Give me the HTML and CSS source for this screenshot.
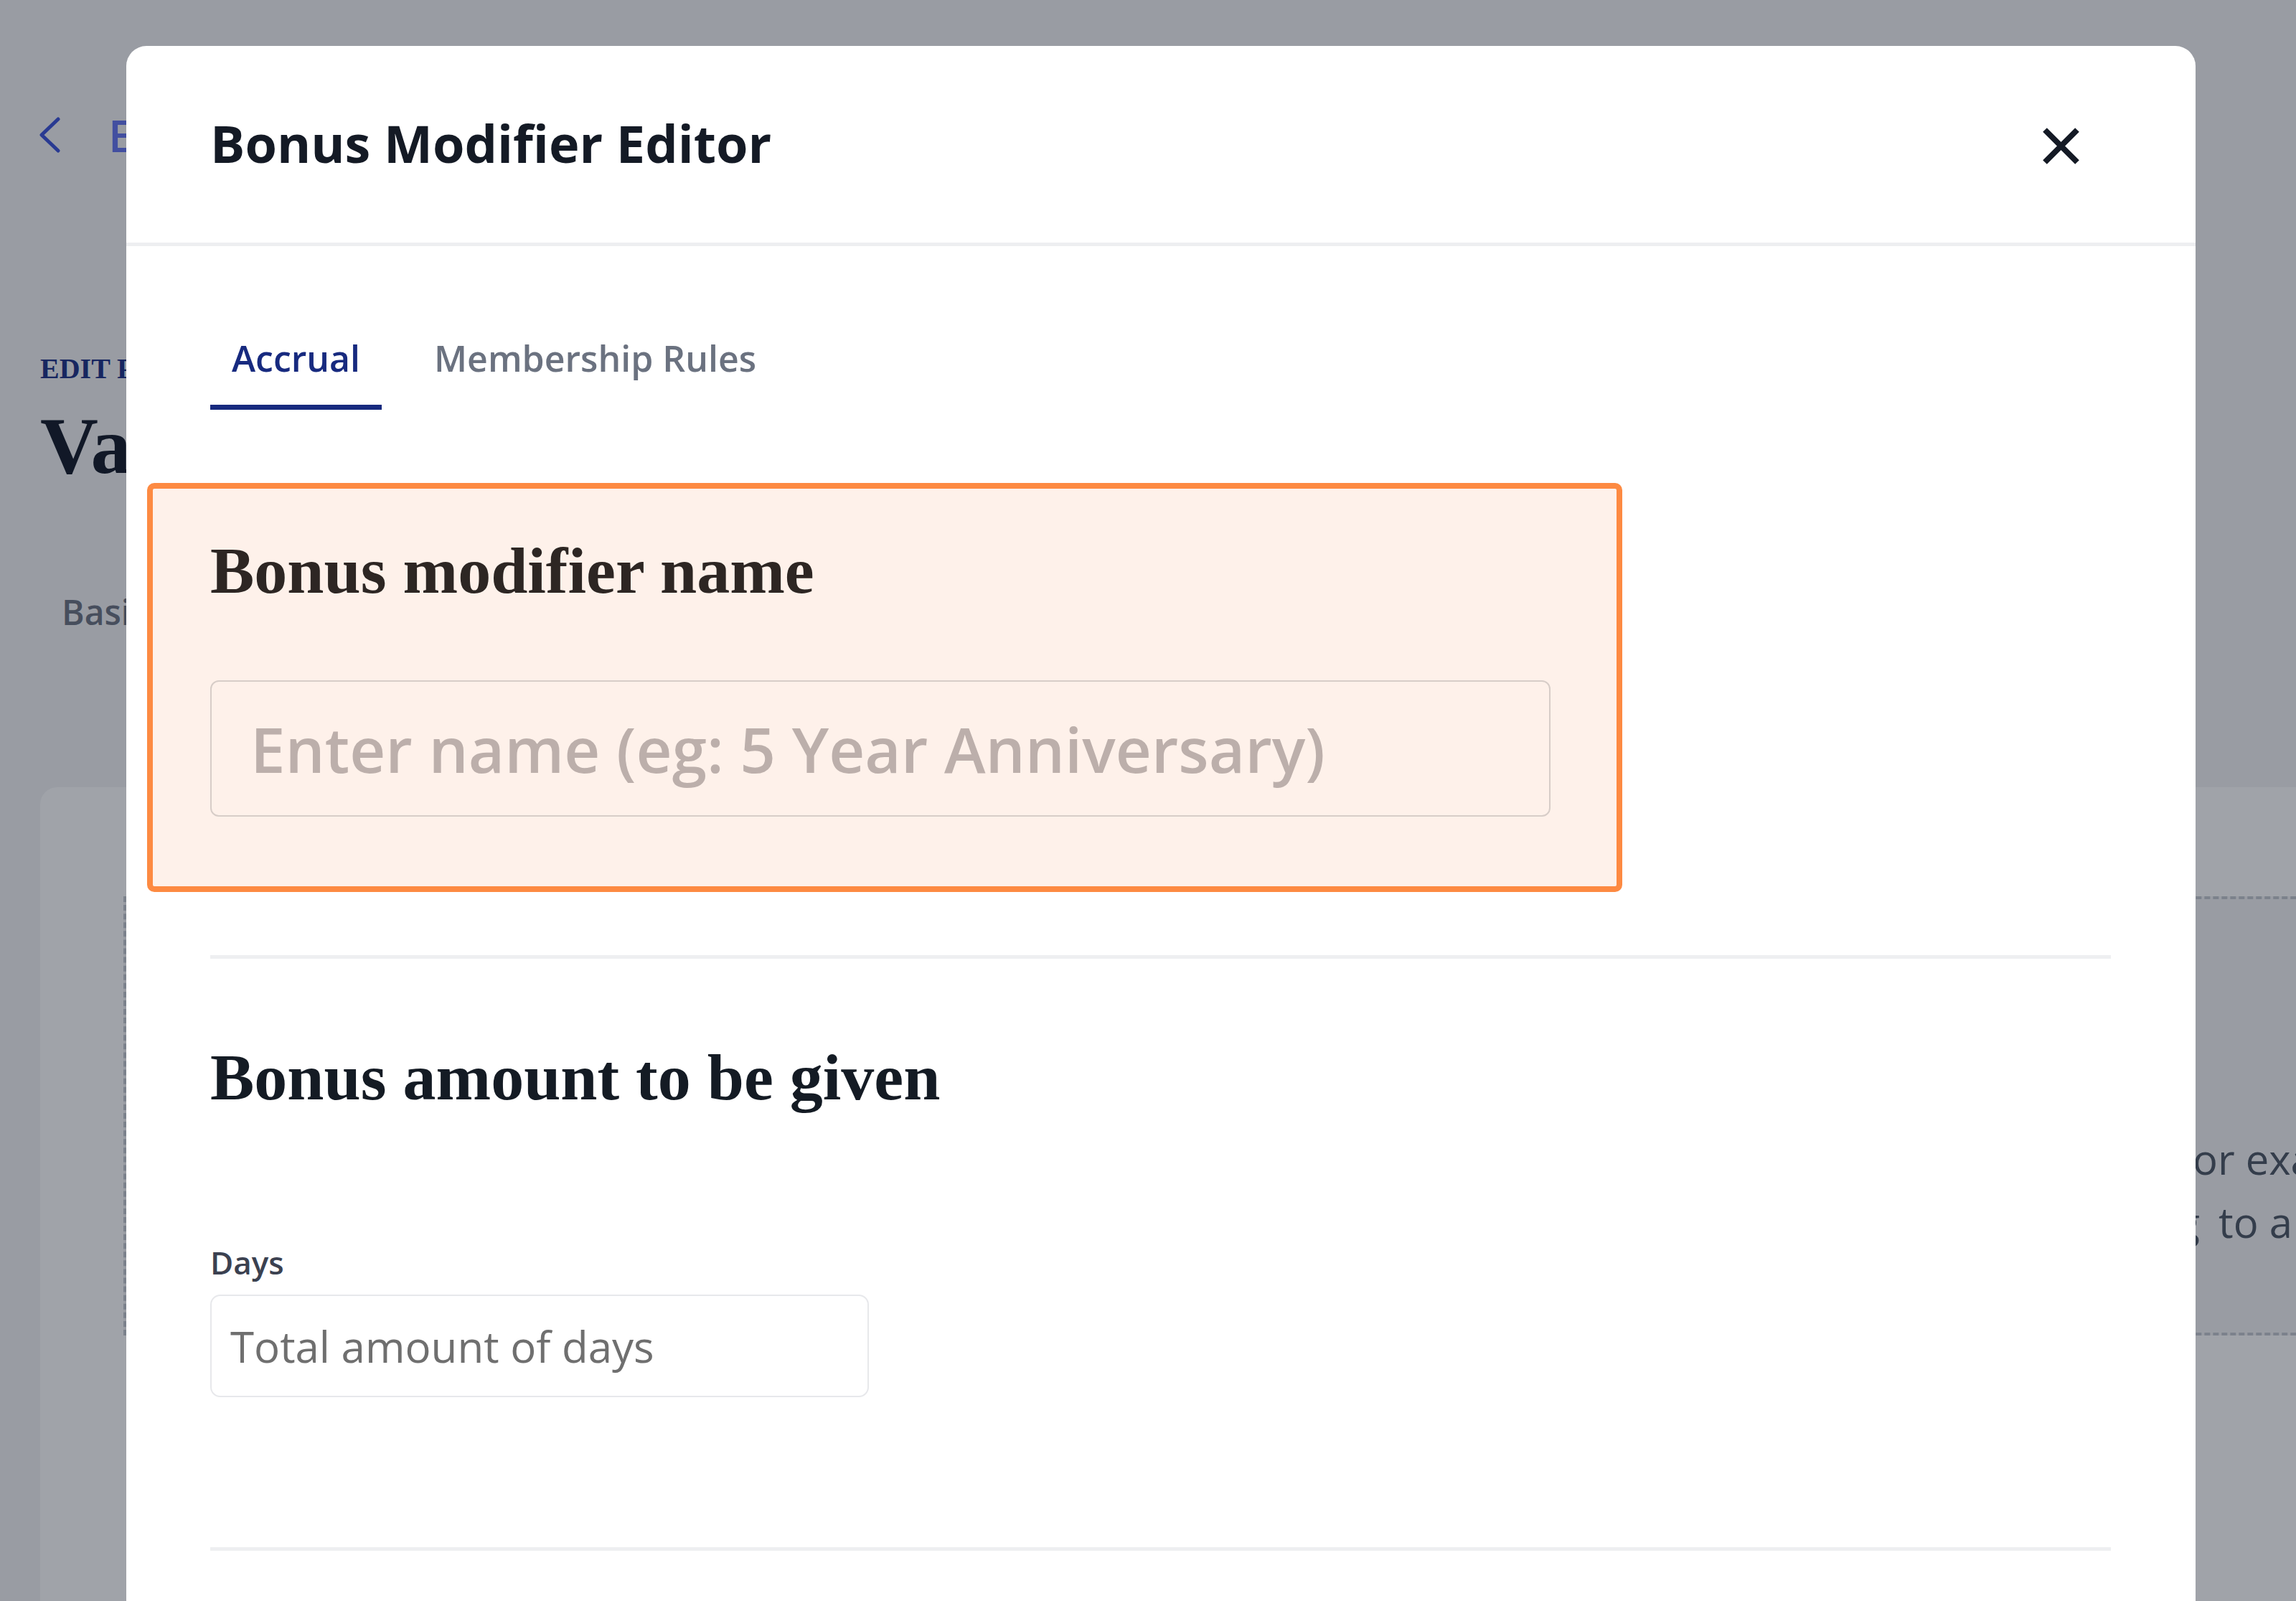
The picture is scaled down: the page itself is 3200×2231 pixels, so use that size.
FILE: index.html
```html
<!DOCTYPE html>
<html lang="en">
<head>
<meta charset="utf-8">
<title>Bonus Modifier Editor</title>
<link rel="stylesheet" href="styles.css">
</head>
<body>
<div class="page">
  <div class="back">
    <svg class="chev" viewBox="0 0 34 50" width="34" height="50"><path d="M29 3 L6 25 L29 47" fill="none" stroke="currentColor" stroke-width="5" stroke-linecap="round" stroke-linejoin="round"/></svg>
    <span class="back-text">Edit policies</span>
  </div>
  <div class="eyebrow">EDIT POLICY</div>
  <h1 class="page-title">Vacation Policy</h1>
  <div class="page-tabs"><span class="page-tab">Basic info</span><span class="page-tab">Accrual</span></div>
  <div class="card">
    <div class="dashed">
      <div class="hint-line"><span class="lead lead-1">Use bonus modifiers to reward tenure, f</span><span>or example extra days</span></div>
      <div class="hint-line"><span class="lead lead-2">with extra days accruing</span><span class="tail-2">to a higher rate</span></div>
    </div>
  </div>
</div>
<div class="overlay"></div>
<div class="modal">
  <header class="modal-head">
    <h2 class="modal-title">Bonus Modifier Editor</h2>
    <button class="close" aria-label="Close"><svg viewBox="0 0 57 57" width="57" height="57"><path d="M6 6 L51 51 M51 6 L6 51" fill="none" stroke="currentColor" stroke-width="8"/></svg></button>
  </header>
  <div class="modal-body">
    <nav class="tabs"><span class="tab active">Accrual</span><span class="tab">Membership Rules</span></nav>
    <section class="name-box">
      <h3 class="sec-title name-title">Bonus modifier name</h3>
      <input class="name-input" type="text" placeholder="Enter name (eg: 5 Year Anniversary)">
    </section>
    <hr class="divider first">
    <section class="amount">
      <h3 class="sec-title amount-title">Bonus amount to be given</h3>
      <label class="field-label">Days</label>
      <input class="days-input" type="text" placeholder="Total amount of days">
    </section>
    <hr class="divider second">
  </div>
</div>
</body>
</html>
```

FILE: styles.css
```css
html, body {
  margin: 0;
  padding: 0;
}
body {
  width: 3200px;
  height: 2231px;
  overflow: hidden;
  position: relative;
  font-family: "Open Sans", "Noto Sans", sans-serif;
  background: #f3f4f6;
}

/* background page */
.page {
  box-sizing: border-box;
  height: 2231px;
  padding: 150px 0 0 56px;
  background: #f3f4f6;
}
.back {
  display: flex;
  align-items: center;
  gap: 65px;
  height: 76px;
}
.chev {
  color: #3a50d9;
  margin-left: -4px;
}
.back-text {
  font-size: 62px;
  line-height: 76px;
  font-weight: 600;
  color: #6373f0;
  white-space: nowrap;
}
.eyebrow {
  margin-top: 264px;
  font-family: "Liberation Serif", serif;
  font-weight: 700;
  font-size: 40px;
  line-height: 48px;
  color: #1b2f85;
}
.page-title {
  margin: 18px 0 0;
  font-family: "Liberation Serif", serif;
  font-weight: 700;
  font-size: 112px;
  line-height: 130px;
  color: #111827;
}
.page-tabs {
  margin-top: 135px;
  display: flex;
  gap: 60px;
}
.page-tab {
  margin-left: 30px;
  font-size: 48px;
  line-height: 64px;
  font-weight: 600;
  color: #6b7280;
}
.card {
  margin-top: 212px;
  width: 3300px;
  height: 1200px;
  box-sizing: border-box;
  padding: 152px 0 0 116px;
  background: #ffffff;
  border-radius: 24px;
}
.dashed {
  box-sizing: border-box;
  height: 612px;
  padding: 318px 0 0 1300px;
  background: #f3f4f6;
  border: 4px dashed #c4c8cf;
  border-right: none;
}
.hint-line {
  display: flex;
  white-space: nowrap;
  font-size: 58px;
  line-height: 88px;
  color: #4b5563;
}
.lead {
  flex: 0 0 auto;
  text-align: right;
}
.lead-1 { width: 1580px; }
.lead-2 { width: 1590px; }
.tail-2 { margin-left: 26px; }

.overlay {
  position: absolute;
  inset: 0;
  background: rgba(17, 24, 39, 0.4);
}

/* modal */
.modal {
  position: absolute;
  left: 176px;
  top: 64px;
  width: 2884px;
  height: 2300px;
  background: #ffffff;
  border-radius: 28px 28px 0 0;
}
.modal-head {
  box-sizing: border-box;
  height: 279px;
  display: flex;
  align-items: center;
  justify-content: space-between;
  padding: 0 118px 5px 117px;
  border-bottom: 5px solid #eeeff1;
}
.modal-title {
  margin: 0;
  font-size: 72px;
  font-weight: 700;
  color: #141a25;
  line-height: 98px;
}
.close {
  border: 0;
  background: none;
  padding: 0;
  margin: 10px 41px 0 0;
  color: #141a25;
  display: flex;
}
.modal-body {
  padding: 124px 118px 0 117px;
}
.tabs {
  display: flex;
  gap: 43px;
}
.tab {
  font-size: 50px;
  line-height: 64px;
  font-weight: 600;
  padding: 0 30px 33px;
  border-bottom: 7px solid transparent;
  color: #6b7280;
}
.tab.active {
  color: #172a7f;
  border-bottom-color: #172a7f;
}
.name-box {
  box-sizing: border-box;
  width: 2056px;
  margin: 102px 0 0 -88px;
  padding: 62px 92px 97px 80px;
  border: 8px solid #fd8a42;
  border-radius: 10px;
  background: #fef1ea;
}
.sec-title {
  margin: 0;
  font-family: "Liberation Serif", serif;
  font-weight: 700;
  font-size: 92px;
  line-height: 104px;
  letter-spacing: 0;
}
.name-title {
  color: #2d2623;
}
.amount-title {
  color: #141b24;
  margin-top: 113px;
}
.name-input {
  display: block;
  box-sizing: border-box;
  width: 100%;
  height: 190px;
  margin-top: 101px;
  padding: 0 54px;
  border: 2px solid #d7cdc8;
  border-radius: 12px;
  background: transparent;
  font-family: "Open Sans", sans-serif;
  font-size: 87px;
  font-weight: 600;
  color: #2d2623;
  outline: none;
}
.name-input::placeholder {
  color: #bcafab;
  opacity: 1;
}
.divider {
  border: 0;
  height: 5px;
  background: #eeeff1;
  margin: 0;
}
.divider.first {
  margin-top: 88px;
}
.divider.second {
  margin-top: 209px;
}
.field-label {
  display: block;
  margin-top: 176px;
  font-size: 44px;
  line-height: 60px;
  font-weight: 600;
  color: #3b4150;
}
.days-input {
  display: block;
  box-sizing: border-box;
  width: 918px;
  height: 143px;
  margin-top: 15px;
  padding: 0 26px;
  border: 2px solid #e7e8eb;
  border-radius: 14px;
  background: #ffffff;
  font-family: "Open Sans", sans-serif;
  font-size: 60px;
  font-weight: 500;
  color: #141b24;
  outline: none;
}
.days-input::placeholder {
  color: #6f6f6f;
  opacity: 1;
}
```
